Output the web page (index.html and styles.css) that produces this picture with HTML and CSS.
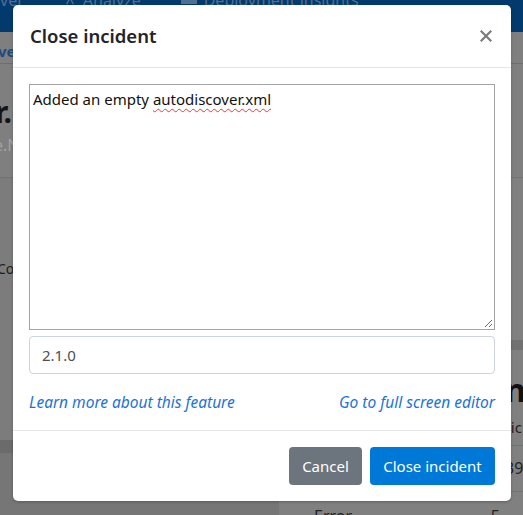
FILE: index.html
```html
<!DOCTYPE html>
<html lang="en">
<head>
<meta charset="utf-8">
<title>Close incident</title>
<link rel="stylesheet" href="styles.css">
</head>
<body>
<div class="page">
  <header class="topnav">
    <span class="nav-item">ver</span>
    <span class="nav-item nav-icon-item"><svg class="nav-icon" viewBox="0 0 14 14" width="12" height="12"><path d="M7 1 L7 6 L3 13 M7 6 L11 13" fill="none" stroke="currentColor" stroke-width="1.5"/></svg>Analyze</span>
    <span class="nav-item nav-icon-item"><svg class="nav-icon" viewBox="0 0 16 12" width="16" height="12"><rect x="0" y="1" width="16" height="10" fill="currentColor"/></svg>Deployment insights</span>
  </header>
  <nav class="subnav"><span class="sub-active">ve</span></nav>
  <section class="pagehead">
    <h1 class="page-title">r.</h1>
    <p class="page-sub">e.N</p>
  </section>
  <div class="content">
    <div class="left-col">
      <div class="left-row">Co</div>
      <div class="left-band"></div>
      <div class="left-foot"></div>
    </div>
    <div class="right-col">
      <div class="card-band"></div>
      <div class="card-title">n</div>
      <div class="card-meta">lic</div>
      <div class="card-row">39</div>
      <div class="card-row card-row-last"><span>Error Ph</span><span>5 Wh</span></div>
    </div>
  </div>
</div>

<div class="modal" role="dialog" aria-labelledby="modal-title">
  <div class="modal-header">
    <h5 class="modal-title" id="modal-title">Close incident</h5>
    <button class="close-btn" type="button" aria-label="Close">
      <svg viewBox="0 0 12 12" width="12" height="12"><path d="M1.5 1.5 L10.5 10.5 M10.5 1.5 L1.5 10.5" stroke="currentColor" stroke-width="2.2" stroke-linecap="square" fill="none"/></svg>
    </button>
  </div>
  <div class="modal-body">
    <div class="notes">Added an empty <span class="misspelled">autodiscover.xml</span><svg class="resize" viewBox="0 0 10 10" width="10" height="10"><path d="M9 2 L2 9 M9 6 L6 9" stroke="#6b6b6b" stroke-width="1" fill="none"/></svg></div>
    <div class="version">2.1.0</div>
    <div class="links">
      <a href="#" class="link">Learn more about this feature</a>
      <a href="#" class="link">Go to full screen editor</a>
    </div>
  </div>
  <div class="modal-footer">
    <button class="btn btn-secondary" type="button">Cancel</button>
    <button class="btn btn-primary" type="button">Close incident</button>
  </div>
</div>
</body>
</html>
```

FILE: styles.css
```css
* { box-sizing: border-box; }

html, body {
  margin: 0;
  padding: 0;
  width: 523px;
  height: 515px;
  overflow: hidden;
}

body {
  font-family: "Noto Sans", "Open Sans", sans-serif;
  background: #7f7f7f;
  position: relative;
}

/* ---------- dimmed background page ---------- */
.page {
  display: flex;
  flex-direction: column;
  height: 515px;
  overflow: hidden;
}
.page > * { flex-shrink: 0; }

.topnav {
  background: #023a6e;
  color: #4f6f95;
  display: flex;
  align-items: flex-start;
  gap: 40px;
  font-size: 16px;
  line-height: 1;
  margin-top: -8px;
  height: 40px;
}
.nav-item { display: flex; align-items: flex-start; gap: 7px; }
.nav-icon { margin-top: 1px; }

.subnav {
  height: 32px;
  border-bottom: 1px solid #6e6e6e;
  display: flex;
  align-items: flex-end;
  padding-bottom: 2px;
}
.sub-active {
  color: #1c4a80;
  font-weight: 700;
  font-size: 15px;
  line-height: 20px;
  margin-left: -2px;
}

.pagehead {
  height: 114px;
  border-bottom: 1px solid #727272;
  padding-top: 30px;
}
.page-title {
  margin: 0;
  font-size: 30px;
  line-height: 36px;
  font-weight: 700;
  color: #141414;
  margin-left: -5px;
}
.page-sub {
  margin: 4px 0 0;
  font-size: 16px;
  line-height: 22px;
  color: #a2a2a2;
  margin-left: -6px;
}

.content {
  flex: 1 0 auto;
  min-height: 0;
  display: grid;
  grid-template-columns: 278px 1fr;
}

.left-col {
  display: flex;
  flex-direction: column;
  background: #7c7c7c;
}
.left-row {
  margin-top: 82px;
  font-size: 14px;
  line-height: 18px;
  color: #1c1c1c;
  margin-left: -3px;
}
.left-band {
  margin-top: 162px;
  height: 13px;
  background: #6b6b6b;
}
.left-foot {
  flex: 1;
  background: #767676;
}

.right-col {
  display: flex;
  flex-direction: column;
  background: #808080;
  border-left: 1px solid #767676;
}
.card-band {
  margin-top: 162px;
  height: 10px;
  background: #717171;
}
.card-title {
  margin-top: 24px;
  font-size: 32px;
  line-height: 32px;
  font-weight: 700;
  color: #111;
  padding-left: 226px;
}
.card-meta {
  margin-top: 10px;
  font-size: 15px;
  line-height: 22px;
  color: #222;
  padding-left: 228px;
  height: 30px;
  border-bottom: 1px solid #737373;
}
.card-row {
  height: 46px;
  border-bottom: 1px solid #737373;
  font-size: 16px;
  line-height: 45px;
  color: #222;
  padding-left: 226px;
}
.card-row-last {
  border-bottom: 0;
  display: flex;
  gap: 120px;
  padding-left: 35px;
  line-height: 16px;
  padding-top: 16px;
}

/* ---------- modal ---------- */
.modal {
  position: absolute;
  left: 13px;
  top: 5px;
  width: 498px;
  height: 496px;
  background: #fff;
  border-radius: 5px;
  box-shadow: 0 1px 3px rgba(0,0,0,.25);
  font-family: "Noto Sans", "Open Sans", sans-serif;
  color: #212529;
  display: flex;
  flex-direction: column;
}

.modal-header {
  height: 63px;
  padding: 16px;
  border-bottom: 1px solid #e5e7ea;
  display: flex;
  align-items: center;
  justify-content: space-between;
}
.modal-title {
  margin: 0;
  font-size: 18.5px;
  line-height: 30px;
  font-weight: 600;
  color: #212529;
  padding-left: 1px;
}
.close-btn {
  border: 0;
  background: none;
  padding: 0;
  margin-right: 3px;
  color: #7b7b7b;
  display: flex;
  cursor: pointer;
}

.modal-body {
  padding: 16px;
  display: flex;
  flex-direction: column;
  border-bottom: 1px solid #e5e7ea;
}

.notes {
  position: relative;
  height: 246px;
  border: 1px solid #a3a3a3;
  padding: 2px 3px;
  font-size: 15px;
  line-height: 24px;
  color: #111;
}
.misspelled {
  text-decoration: underline wavy #e8393b;
  text-decoration-thickness: 1px;
  text-underline-offset: 3px;
}
.resize {
  position: absolute;
  right: 1px;
  bottom: 1px;
}

.version {
  margin-top: 6px;
  height: 38px;
  border: 1px solid #ced4da;
  border-radius: 4px;
  padding: 0 12px;
  font-size: 15px;
  line-height: 36px;
  color: #495057;
}

.links {
  margin-top: 16px;
  display: flex;
  justify-content: space-between;
  font-size: 15.5px;
  line-height: 24px;
}
.link {
  color: #1a73d9;
  font-style: italic;
  text-decoration: none;
}

.modal-footer {
  padding: 16px;
  display: flex;
  justify-content: flex-end;
  gap: 8px;
}
.btn {
  height: 38px;
  border: 0;
  border-radius: 4px;
  padding: 0 12px;
  font-family: inherit;
  font-size: 15px;
  line-height: 38px;
  color: #fff;
}
.btn-secondary { background: #6c757d; width: 73px; }
.btn-primary { background: #0078d7; width: 125px; }
```
